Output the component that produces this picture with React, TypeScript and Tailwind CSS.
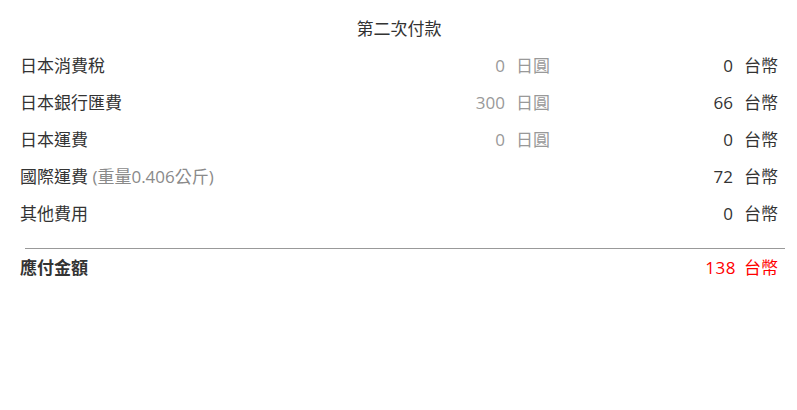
import React from "react";

const rows = [
  { label: "日本消費稅", note: "", jp: "0", tw: "0" },
  { label: "日本銀行匯費", note: "", jp: "300", tw: "66" },
  { label: "日本運費", note: "", jp: "0", tw: "0" },
  { label: "國際運費", note: "(重量0.406公斤)", jp: null, tw: "72" },
  { label: "其他費用", note: "", jp: null, tw: "0" },
];

export default function App() {
  return (
    <div
      className="w-[797px] h-[410px] bg-white text-[17px] text-[#333]"
      style={{ fontFamily: '"Open Sans", "Noto Sans CJK TC", sans-serif' }}
    >
      <div className="pt-[10px] pl-[20px] pr-[19px]">
        <div className="h-[37px] flex items-center justify-center">第二次付款</div>
        {rows.map((r) => (
          <div key={r.label} className="h-[37px] flex items-center">
            <div className="flex-1">
              {r.label}
              {r.note && <span className="text-[#8a8a8a]"> {r.note}</span>}
            </div>
            <div className="w-[120px] flex justify-end text-[#999]">
              {r.jp !== null && (
                <>
                  <span>{r.jp}</span>
                  <span className="ml-[11px]">日圓</span>
                </>
              )}
            </div>
            <div className="w-[228px] flex justify-end">
              <span>{r.tw}</span>
              <span className="ml-[11px]">台幣</span>
            </div>
          </div>
        ))}
      </div>
      <div className="ml-[25px] mr-[12px] mt-[16px] h-px bg-[#999]" />
      <div className="pl-[20px] pr-[19px] h-[37px] flex items-center">
        <div className="flex-1 font-bold">應付金額</div>
        <div className="flex text-[#ff0000]">
          <span className="tracking-[0.5px]">138</span>
          <span className="ml-[8px]">台幣</span>
        </div>
      </div>
    </div>
  );
}
